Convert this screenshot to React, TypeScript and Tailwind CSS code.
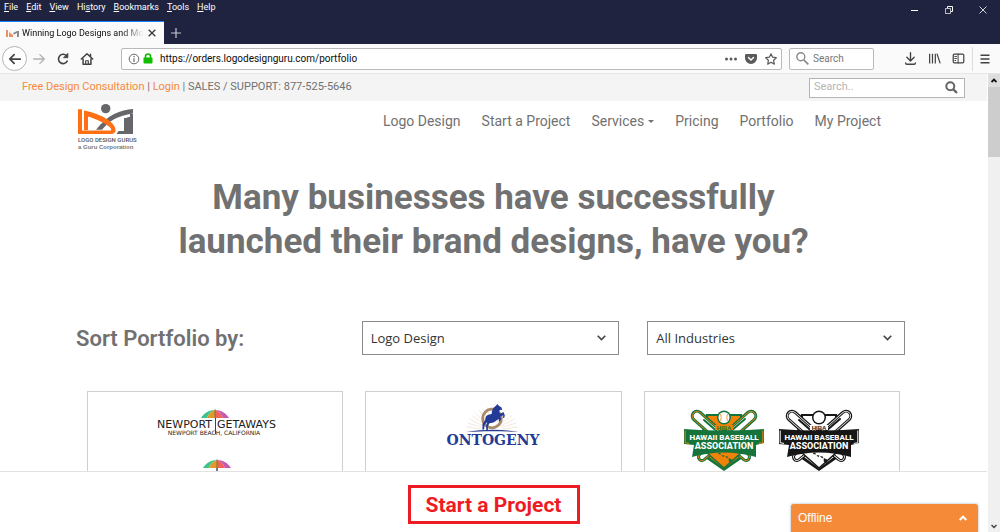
import type { ReactNode } from "react";

const brandFont = "font-['Roboto',sans-serif]";
const uiFont = "font-['Open_Sans',sans-serif]";

const menus = [
  ["", "F", "ile"],
  ["", "E", "dit"],
  ["", "V", "iew"],
  ["Hi", "s", "tory"],
  ["", "B", "ookmarks"],
  ["", "T", "ools"],
  ["", "H", "elp"],
];

const navItems = ["Logo Design", "Start a Project", "Services", "Pricing", "Portfolio", "My Project"];

function Glyph({ size = 14, children }: { size?: number; children: ReactNode }) {
  return (
    <svg width={size} height={size} viewBox="0 0 16 16" fill="none" stroke="currentColor" strokeWidth="2" strokeLinecap="round" strokeLinejoin="round" aria-hidden="true">
      {children}
    </svg>
  );
}

function IconButton({ label, className = "", children }: { label: string; className?: string; children: ReactNode }) {
  return (
    <button type="button" aria-label={label} className={`flex h-6 w-6 shrink-0 items-center justify-center ${className}`}>
      {children}
    </button>
  );
}

function TitleBar() {
  return (
    <div className="h-11 bg-[#20233f] text-white">
      <div className="flex h-[21px] items-start justify-between">
        <div className="flex gap-2 pl-1 text-[9px] leading-[14px]">
          {menus.map(([a, key, b]) => (
            <button type="button" key={key + b}>
              {a}
              <span className="underline">{key}</span>
              {b}
            </button>
          ))}
        </div>
        <div className="flex gap-[10px] pr-[5px]">
          <button type="button" aria-label="Minimize" className="flex h-5 w-6 items-center justify-center">
            <svg width="8" height="8" viewBox="0 0 8 8" stroke="currentColor"><path d="M0 4.5h7" /></svg>
          </button>
          <button type="button" aria-label="Restore" className="flex h-5 w-6 items-center justify-center">
            <svg width="8" height="8" viewBox="0 0 8 8" fill="none" stroke="currentColor">
              <path d="M.5 2.5h5v5h-5z" opacity=".7" />
              <path d="M2.5 2V.5h5v5H6" />
            </svg>
          </button>
          <button type="button" aria-label="Close" className="flex h-5 w-6 items-center justify-center">
            <svg width="8" height="8" viewBox="0 0 8 8" stroke="currentColor" strokeWidth=".8"><path d="M.5.5l7 7M7.500.5l-7 7" /></svg>
          </button>
        </div>
      </div>
      <div className="flex h-[23px]">
        <div className="flex w-[164px] items-center border-t border-[#0a84ff] bg-[#fafafb] pr-2 pl-[6px] text-[#0c0c0d]">
          <svg width="13" height="7" viewBox="0 0 13 7" className="shrink-0" aria-hidden="true">
            <path d="M0 0h2v7H0zM3 2l4 3v2H3z" fill="#f0905c" />
            <path d="M7 3l4-2h2v6h-2V3L8 4.500z" fill="#8a8a8e" />
          </svg>
          <span className="ml-[3px] flex-1 overflow-hidden text-[9px] leading-4 whitespace-nowrap [mask-image:linear-gradient(to_right,black_82%,transparent)]">
            Winning Logo Designs and More
          </span>
          <button type="button" aria-label="Close tab" className="ml-1 shrink-0">
            <svg width="8" height="8" viewBox="0 0 8 8" stroke="#3a3a3c" strokeWidth="1.300"><path d="M.7.7l6.600 6.600M7.300.7.7 7.300" /></svg>
          </button>
        </div>
        <button type="button" aria-label="New tab" className="flex w-6 items-center justify-center text-[#c6c6cf]">
          <svg width="10" height="10" viewBox="0 0 10 10" stroke="currentColor" strokeWidth="1.200"><path d="M5 0v10M0 5h10" /></svg>
        </button>
      </div>
    </div>
  );
}

function Toolbar() {
  return (
    <div className="flex h-[30px] items-center border-b border-[#e6e6e8] bg-[#fafafb] pl-[2px] text-[#424245]">
      <button type="button" aria-label="Back" className="flex h-[25px] w-[25px] shrink-0 items-center justify-center rounded-full border border-[#b4b4b6] bg-white">
        <Glyph><path d="M14 8H2.500M7 3L2 8l5 5" /></Glyph>
      </button>
      <IconButton label="Forward" className="text-[#b1b1b3]"><Glyph><path d="M2 8h11.500M9 3l5 5-5 5" strokeWidth="1.600" /></Glyph></IconButton>
      <IconButton label="Reload">
        <Glyph><path d="M12.800 10.500A5.300 5.300 0 1 1 12 4.300" strokeWidth="1.800" /><path d="M13.500 2v4.500H9z" fill="currentColor" strokeWidth="1" /></Glyph>
      </IconButton>
      <IconButton label="Home">
        <Glyph>
          <path d="M1.500 8L8 2l6.500 6M3.500 8v6h9V8M12 2.500v3" strokeWidth="1.700" />
          <path d="M6.500 14v-4h3v4" strokeWidth="1.300" />
        </Glyph>
      </IconButton>
      <div className="ml-[22px] flex h-[22px] flex-1 items-center rounded-[2px] border border-[#b9b9bb] bg-white pr-1 pl-[6px]">
        <svg width="12" height="12" viewBox="0 0 12 12" fill="none" stroke="#69696c" className="shrink-0" aria-hidden="true">
          <circle cx="6" cy="6" r="4.800" />
          <path d="M6 5.300V9M6 3v1.200" strokeWidth="1.200" />
        </svg>
        <svg width="10" height="11" viewBox="0 0 10 11" className="mr-[7px] ml-[3px] shrink-0" aria-hidden="true">
          <rect x=".5" y="4.500" width="9" height="6" rx=".8" fill="#12bc00" />
          <path d="M2.500 5V3.500a2.500 2.500 0 0 1 5 0V5" fill="none" stroke="#12bc00" strokeWidth="1.600" />
        </svg>
        <input
          aria-label="Address"
          defaultValue="https://orders.logodesignguru.com/portfolio"
          className="h-4 min-w-0 flex-1 bg-transparent text-[10px] text-[#0c0c0d] outline-none"
        />
        <div className="flex items-center gap-2 text-[#5a5a5c]">
          <button type="button" aria-label="Page actions">
            <svg width="12" height="12" viewBox="0 0 12 12" fill="currentColor"><circle cx="1.500" cy="6" r="1.500" /><circle cx="6" cy="6" r="1.500" /><circle cx="10.500" cy="6" r="1.500" /></svg>
          </button>
          <button type="button" aria-label="Save to Pocket">
            <svg width="12" height="12" viewBox="0 0 12 12">
              <path d="M1.500 1h9A1.300 1.300 0 0 1 12 2.300V5a6 6 0 0 1-12 0V2.300A1.300 1.300 0 0 1 1.500 1z" fill="currentColor" />
              <path d="M3.500 4.500L6 7l2.500-2.500" fill="none" stroke="#fff" strokeWidth="1.400" strokeLinecap="round" />
            </svg>
          </button>
          <button type="button" aria-label="Bookmark this page">
            <svg width="12" height="12" viewBox="0 0 12 12" fill="none" stroke="currentColor" strokeWidth="1.200" strokeLinejoin="round">
              <path d="M6 .8l1.600 3.400 3.700.5-2.700 2.600.7 3.800L6 9.300l-3.300 1.800.7-3.800L.7 4.700l3.700-.5z" />
            </svg>
          </button>
        </div>
      </div>
      <label className="ml-[7px] flex h-[22px] w-[85px] shrink-0 items-center gap-1 rounded-[2px] border border-[#b9b9bb] bg-white pl-[6px]">
        <svg width="13" height="13" viewBox="0 0 13 13" fill="none" stroke="#8a8a8c" strokeWidth="1.400" aria-hidden="true"><circle cx="4.800" cy="4.800" r="4" /><path d="M7.800 7.800l4.500 4.500" strokeWidth="1.700" /></svg>
        <input aria-label="Search the web" placeholder="Search" className="w-12 bg-transparent text-[10px] outline-none placeholder:text-[#77777a]" />
      </label>
      <div className="ml-6 flex items-center">
        <IconButton label="Downloads"><Glyph size={13}><path d="M8 1v9M3.500 6.500L8 11l4.500-4.500M2 13.500c0 1 .5 1.500 1.500 1.500h9c1 0 1.500-.5 1.500-1.500" strokeWidth="1.700" /></Glyph></IconButton>
        <IconButton label="Library"><Glyph size={13}><path d="M2 2v12M5.500 2v12M9 2v12M11 2l4 12" strokeWidth="1.500" strokeLinecap="butt" /></Glyph></IconButton>
        <IconButton label="Sidebars">
          <Glyph size={13}><rect x="1.500" y="2.500" width="13" height="11" rx="1.500" strokeWidth="1.500" /><path d="M7.500 2.500v11M3.500 5.500h2M3.500 8h2M3.500 10.500h1" strokeWidth="1.200" /></Glyph>
        </IconButton>
      </div>
      <div className="ml-[2px] flex h-6 items-center border-l border-[#dcdcde]">
        <IconButton label="Open menu" className="mr-[3px]"><Glyph size={12}><path d="M2 3h12M2 8h12M2 13h12" strokeLinecap="butt" /></Glyph></IconButton>
      </div>
    </div>
  );
}

function GuruLogo() {
  return (
    <a href="#home" aria-label="Logo Design Guru">
      <svg width="62" height="49" viewBox="0 0 62 49">
        <circle cx="27.700" cy="5.600" r="4.700" fill="#67676b" />
        <path d="M55 6C43 6.500 29 12 18 26.800h6C31 18 40 12.500 55 10.500z" fill="#67676b" />
        <path d="M55 10v21H38.500l2-3H46V15.500l6-1.500v14h3V10z" fill="#67676b" />
        <path d="M46 15.500l6-1.500v2l-3.500.8V28H46z" fill="#67676b" />
        <path d="M52 11h3v20h-3z" fill="#67676b" />
        <path d="M0 6.300h4v21.200h29c2-2-5-8-23-14v13.500H6V7.500C24 11 38 20 37.500 27c0 3-2 4-5 4H0z" fill="#ff6f13" />
        <text x="0" y="39" fontSize="6" fill="#55555a" fontWeight="500" fontFamily="Roboto">
          LOGO DESIGN GURUS
        </text>
        <text x="0" y="46" fontSize="6" fill="#77777a" fontWeight="700" fontFamily="Liberation Sans">
          a Guru Corporation
        </text>
      </svg>
    </a>
  );
}

function Umbrella({ x, y }: { x: number; y: number }) {
  return (
    <g transform={`translate(${x} ${y})`}>
      <path d="M0 9C3 4 8 1 14 1 9 3 7 6 6 9z" fill="#3cc48c" />
      <path d="M6 9c1-3 4-7 8-8v8z" fill="#e09a2c" />
      <path d="M14 1c4 1 7 5 8 8h-8z" fill="#f0645a" />
      <path d="M14 1c6 0 11 3 14 8h-6c-1-3-3-6-8-8z" fill="#c65ab0" />
      <path d="M14 0v9" stroke="#555" strokeWidth=".6" />
    </g>
  );
}

function NewportLogo() {
  return (
    <svg width="130" height="66" viewBox="0 0 130 66" role="img" aria-label="Newport Getaways">
      <Umbrella x={51} y={0} />
      <path d="M65.500 9v16" stroke="#444" strokeWidth="1" />
      <text x="62" y="19" textAnchor="end" fontSize="11" fontFamily="DejaVu Sans" fill="#222">NEWPORT</text>
      <text x="67" y="19" fontSize="11" fontFamily="DejaVu Sans" fill="#222">GETAWAYS</text>
      <text x="64" y="26" textAnchor="middle" fontSize="6" fontFamily="DejaVu Sans" fill="#222">NEWPORT BEACH, CALIFORNIA</text>
      <Umbrella x={53} y={50} />
      <path d="M67 59v7" stroke="#222" strokeWidth="1.200" />
    </svg>
  );
}

function OntogenyLogo() {
  const rays = Array.from({ length: 19 }, (_, i) => (i * Math.PI) / 18);
  return (
    <svg width="110" height="48" viewBox="-5 0 110 48" role="img" aria-label="Ontogeny">
      <g stroke="#ece0d0" strokeWidth=".7">
        {rays.map((a) => (
          <line key={a} x1={49 + Math.cos(a) * 10} y1={28 - Math.sin(a) * 10} x2={49 + Math.cos(a) * 26} y2={28 - Math.sin(a) * 24} />
        ))}
      </g>
      <circle cx="49" cy="15.500" r="9.300" fill="none" stroke="#a98b6c" strokeWidth="2.800" />
      <path
        d="M54.500 1l1 1.500 3 2 .8 2.500-2-.3-1.500 1.500 1.500 2.500 3-1.700 1.500 3-.6 3-1.200-.3.200-2.500-3 1.500 1 2-1.500 3-1-.5.500-2.300-3 1.500c-3 3-5 2-7 3l-1.500 3.500.6 4h-1.800l-.5-4.500 1.200-4.500-2.500 2.500-.6 5h-2c1-2 0-4 .4-5.500l2.700-4c0-3 1-5 4-5.500l2.500-.5c0-3 1-6.500 4-8z"
        fill="#233b96"
      />
      <path d="M24 29c16-3 36-3 51 0-16-1-36-1-51 0z" fill="#233b96" />
      <text x="50" y="42" textAnchor="middle" fontSize="14" fontWeight="700" fontFamily="DejaVu Serif" fill="#233b96">ONTOGENY</text>
    </svg>
  );
}

function BaseballBadge({ line, fill }: { line: string; fill: string }) {
  const bats = ["M13 7L40 31", "M67 7L40 31"];
  const handles = ["M18 48L30 38", "M62 48L50 38"];
  return (
    <svg width="80" height="64" viewBox="0 0 80 64" role="img" aria-label="Hawaii Baseball Association">
      <path d="M22 5h36l5 25v16L40 62 17 46V26z" fill={line} />
      <path d="M24 7h32v14H24zM20 44l20 15.500L60 44z" fill={fill} />
      <g strokeLinecap="round" fill="none">
        {bats.map((d) => (
          <g key={d}>
            <path d={d} stroke={line} strokeWidth="12.500" />
            <path d={d} stroke={fill} strokeWidth="10" />
            <path d={d} stroke={line} strokeWidth="8.500" />
            <path d={d} stroke="#fff" strokeWidth="6.500" />
          </g>
        ))}
        <path d="M20 11l12 10.500M61 10L47 22" stroke={line} strokeWidth="2" />
        {handles.map((d) => (
          <g key={d}>
            <path d={d} stroke={line} strokeWidth="10" />
            <path d={d} stroke={fill} strokeWidth="7.500" />
            <path d={d} stroke={line} strokeWidth="6" />
            <path d={d} stroke="#fff" strokeWidth="4" />
          </g>
        ))}
      </g>
      <path d="M22 43l18 16 18-16-8-6H30z" fill={fill} stroke={line} strokeWidth="1.500" />
      <circle cx="40" cy="8.500" r="7" fill={line} />
      <circle cx="40" cy="8.500" r="5.500" fill="#fff" />
      <path d="M36.500 5q1.500 3.500 0 7M43.500 5q-1.500 3.500 0 7" fill="none" stroke={fill} strokeWidth=".8" />
      <path d="M31 21v-5h18v5z" fill={fill} />
      <text x="40" y="20.500" textAnchor="middle" fontSize="6" fontWeight="700" fontFamily="Liberation Sans" fill={line}>HIBA</text>
      <path d="M0 20q40 3 80 0v14l-8 2v12q-32-9-64 0l2-12-10-1z" fill={line} />
      <path d="M1.200 21.500v12.300l3.800.6M78.800 21.500v12.300l-4 .6" fill="none" stroke={fill} strokeWidth="1" />
      <text x="40" y="30.500" textAnchor="middle" fontSize="8" fontWeight="800" fontFamily="Roboto" fill="#fff">HAWAII BASEBALL</text>
      <text x="40" y="39.500" textAnchor="middle" fontSize="9" fontWeight="800" fontFamily="Roboto" fill="#fff">ASSOCIATION</text>
      <path d="M34 44.500l2-.5.500 1.200zM38 46.500l2 .3-.7 1zM41.500 47.500l2.500.5-.5 1zM45 49.500l3.500 1.500-1 3-2.500-1.500z" fill={line} stroke={line} strokeWidth=".6" />
    </svg>
  );
}

function SelectField({ label, options }: { label: string; options: string[] }) {
  return (
    <div className="grid items-center">
      <select
        aria-label={label}
        className="col-start-1 row-start-1 h-[34px] w-full appearance-none border border-[#8b8b8b] bg-white px-2 pt-[2px] text-[13px] text-[#333] outline-none"
      >
        {options.map((o) => (
          <option key={o}>{o}</option>
        ))}
      </select>
      <svg width="9" height="6" viewBox="0 0 9 6" fill="none" stroke="#444" strokeWidth="1.600" className="pointer-events-none col-start-1 row-start-1 mr-[13px] justify-self-end" aria-hidden="true">
        <path d="M.7.7l3.800 3.800L8.300.7" />
      </svg>
    </div>
  );
}

function Scrollbar() {
  return (
    <div className="flex w-3 shrink-0 flex-col items-center justify-between bg-[#f0f0f0]" aria-hidden="true">
      <div className="w-full">
        <div className="flex h-[13px] items-center justify-center bg-[#dedede]">
          <svg width="6" height="5" viewBox="0 0 6 5" fill="none" stroke="#111" strokeWidth="1.800"><path d="M.5 4L3 1.500 5.500 4" /></svg>
        </div>
        <div className="h-[70px] bg-[#cdcdcd]" />
      </div>
      <svg width="6" height="5" viewBox="0 0 6 5" fill="none" stroke="#444" strokeWidth="1.500" className="mb-[3px]"><path d="M.5 1L3 3.500 5.500 1" /></svg>
    </div>
  );
}

export default function App() {
  return (
    <div className={`flex h-screen flex-col overflow-hidden bg-white ${brandFont}`}>
      <header>
        <TitleBar />
        <Toolbar />
      </header>
      <div className="flex min-h-0 flex-1">
        <div className="relative mr-px flex min-w-0 flex-1 flex-col text-[#717171]">
          <div className="min-h-0 flex-1 overflow-hidden">
            <div className="flex h-[27px] items-center justify-between bg-[#f4f4f4] px-[22px] text-[11px]">
              <p>
                <a href="#consultation" className="text-[#f58a3c]">Free Design Consultation</a> |{" "}
                <a href="#login" className="text-[#f58a3c]">Login</a> | SALES / SUPPORT: 877-525-5646
              </p>
              <form className="flex h-5 w-[156px] items-center border border-[#b4b4b4] bg-white pr-[6px] pl-1">
                <input aria-label="Search the site" placeholder="Search.." className="min-w-0 flex-1 text-[11px] outline-none placeholder:text-[#b5b5b5]" />
                <button type="button" aria-label="Search">
                  <svg width="13" height="13" viewBox="0 0 13 13" fill="none" stroke="#666" strokeWidth="2"><circle cx="5.300" cy="5.300" r="4" /><path d="M8.300 8.300l3.700 3.700" strokeWidth="2.400" /></svg>
                </button>
              </form>
            </div>

            <div className="flex items-start justify-between pt-[2px] pr-[106px] pl-[78px]">
              <GuruLogo />
              <nav className="flex gap-[21px] pt-2 text-[14px] leading-5">
                {navItems.map((item) => (
                  <a key={item} href="#nav" className="flex items-center gap-1">
                    {item}
                    {item === "Services" && (
                      <svg width="6" height="3" viewBox="0 0 6 3" fill="currentColor" aria-hidden="true"><path d="M0 0h6L3 3z" /></svg>
                    )}
                  </a>
                ))}
              </nav>
            </div>

            <h1 className="mt-6 text-center text-[35px] leading-[44px] font-bold">
              Many businesses have successfully
              <br />
              launched their brand designs, have you?
            </h1>

            <div className="mt-[57px] grid grid-cols-3 items-center gap-7 pr-[82px] pl-[76px]">
              <h2 className="pt-[2px] text-[22px] leading-8 font-semibold">Sort Portfolio by:</h2>
              <div className={uiFont}>
                <SelectField label="Design type" options={["Logo Design", "Web Design", "Stationery"]} />
              </div>
              <div className={uiFont}>
                <SelectField label="Industry" options={["All Industries", "Sports", "Travel"]} />
              </div>
            </div>

            <div className="mt-9 grid grid-cols-3 gap-[22px] px-[87px]">
              <div className="flex h-64 justify-center border border-[#cfcfcf] pt-[17px]"><NewportLogo /></div>
              <div className="flex h-64 justify-center border border-[#cfcfcf] pt-[11px]"><OntogenyLogo /></div>
              <div className="flex h-64 justify-center gap-[15px] border border-[#cfcfcf] pt-[17px]">
                <BaseballBadge line="#14743c" fill="#f0820a" />
                <BaseballBadge line="#161616" fill="#ffffff" />
              </div>
            </div>
          </div>

          <div className="flex h-[61px] shrink-0 items-center justify-center border-t border-[#e2e2e2] bg-white pt-[5px]">
            <button type="button" className="h-[39px] w-[172px] border-[3px] border-[#ed1c24] pt-[2px] text-[21px] font-bold text-[#ed1c24]">Start a Project</button>
          </div>

          <button
            type="button"
            className="absolute right-[9px] bottom-0 flex h-7 w-[187px] items-center justify-between rounded-t-[3px] bg-[#f58a38] px-[7px] font-['Liberation_Sans',sans-serif] text-[12px] text-white shadow-[0_0_2px_1px_#d4dbe2]"
          >
            Offline
            <svg width="8" height="6" viewBox="0 0 8 6" fill="none" stroke="#fff" strokeWidth="2" className="mr-1" aria-hidden="true"><path d="M.7 5L4 1.700 7.300 5" /></svg>
          </button>
        </div>
        <Scrollbar />
      </div>
    </div>
  );
}
